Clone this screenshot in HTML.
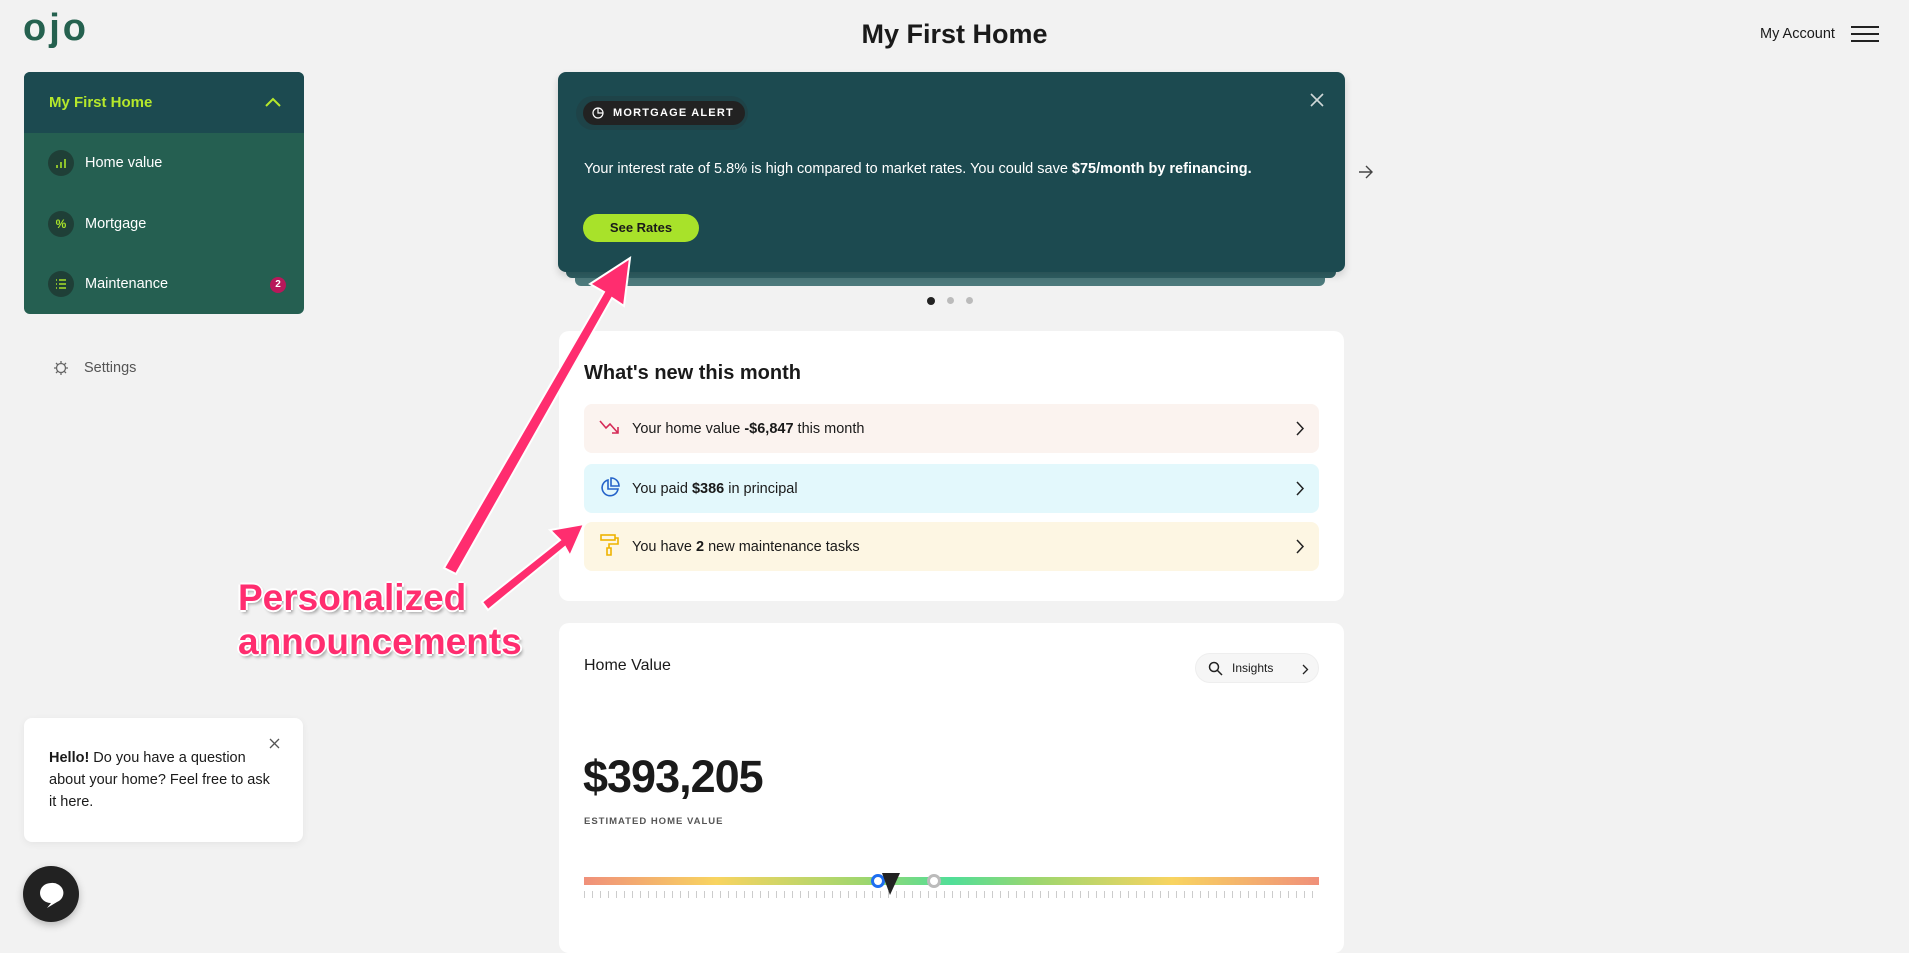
<!DOCTYPE html>
<html><head><meta charset="utf-8"><style>
*{box-sizing:border-box;margin:0;padding:0}
body{width:1909px;height:937px;overflow:hidden;background:#f2f2f2;font-family:"Liberation Sans",sans-serif;color:#1a1a1a;position:relative}
.abs{position:absolute}
.card{position:absolute;background:#fff;border-radius:10px}
.row{position:absolute;left:25px;width:735px;height:49px;border-radius:8px;font-size:14.5px;display:flex;align-items:center;padding-left:48px}
.row svg.ic{position:absolute;left:15px;top:14px}
.row .chev{position:absolute;right:14px;top:17px}
.nav{position:absolute;left:24px;width:280px;display:flex;align-items:center;color:#fff;font-size:14.5px}
.nav .c{width:26px;height:26px;border-radius:13px;background:#1f3f37;margin-left:24px;margin-right:11px;display:flex;align-items:center;justify-content:center}
</style></head><body>
<div class="abs" style="left:23px;top:8px;font-size:38px;font-weight:bold;color:#25614f;letter-spacing:3px;line-height:40px">ojo</div>
<div class="abs" style="left:0;width:1909px;top:19px;text-align:center;font-size:27px;font-weight:bold;color:#1a1a1a">My First Home</div>
<div class="abs" style="left:1760px;top:26px;font-size:14.5px">My Account</div>
<div class="abs" style="left:1851px;top:26px;width:28px;height:2px;background:#222;box-shadow:0 7px 0 #222,0 14px 0 #222"></div>

<div class="abs" style="left:24px;top:72px;width:280px;height:242px;border-radius:6px;overflow:hidden;background:#255f51">
 <div style="height:61px;background:#1c4a50;display:flex;align-items:center;padding-left:25px;color:#b6e82b;font-weight:bold;font-size:15px">My First Home
  <svg class="abs" style="left:240px;top:24px" width="18" height="12"><path d="M2 10 L9 3 L16 10" stroke="#b6e82b" stroke-width="2" fill="none"/></svg></div>
</div>
<div class="nav" style="top:150px"><span class="c"><svg width="12" height="12"><path d="M2 11V8M6 11V5M10 11V2" stroke="#a8e22a" stroke-width="1.6"/></svg></span>Home value</div>
<div class="nav" style="top:211px"><span class="c" style="color:#a8e22a;font-size:12px;font-weight:bold">%</span>Mortgage</div>
<div class="nav" style="top:271px"><span class="c"><svg width="12" height="12"><path d="M1 2h1M4 2h7M1 6h1M4 6h7M1 10h1M4 10h7" stroke="#a8e22a" stroke-width="1.4"/></svg></span>Maintenance</div>
<div class="abs" style="left:270px;top:277px;width:16px;height:16px;border-radius:8px;background:#b8185a;color:#fff;font-size:10px;font-weight:bold;text-align:center;line-height:16px">2</div>
<svg class="abs" style="left:53px;top:360px" width="16" height="16"><circle cx="8" cy="8" r="4.5" stroke="#666" stroke-width="1.3" fill="none"/><path d="M8 1v2.5M8 12.5V15M1 8h2.5M12.5 8H15M3 3l1.7 1.7M11.3 11.3L13 13M13 3l-1.7 1.7M4.7 11.3L3 13" stroke="#666" stroke-width="1.3"/></svg>
<div class="abs" style="left:84px;top:360px;font-size:14.5px;color:#555">Settings</div>

<div class="abs" style="left:575px;top:272px;width:750px;height:14px;background:#4d7a7c;border-radius:0 0 6px 6px"></div>
<div class="abs" style="left:566px;top:266px;width:770px;height:12px;background:#2f5f63;border-radius:0 0 6px 6px"></div>
<div class="abs" style="left:558px;top:72px;width:787px;height:200px;background:#1c4a50;border-radius:8px;box-shadow:0 4px 8px rgba(0,0,0,.15)">
 <div class="abs" style="left:18px;top:24px;width:172px;height:34px;border-radius:17px;background:#1e4348"></div>
 <div class="abs" style="left:25px;top:29px;width:162px;height:24px;border-radius:12px;background:#222;color:#fff;font-size:11px;font-weight:bold;letter-spacing:1.2px;line-height:24px;padding-left:30px">MORTGAGE ALERT</div>
 <svg class="abs" style="left:34px;top:35px" width="12" height="12"><circle cx="6" cy="6" r="5" stroke="#fff" stroke-width="1.2" fill="none"/><path d="M6 1v5h5" stroke="#fff" stroke-width="1.2" fill="none"/></svg>
 <div class="abs" style="left:26px;top:89px;color:#fff;font-size:14.5px;white-space:nowrap">Your interest rate of 5.8% is high compared to market rates. You could save <b>$75/month by refinancing.</b></div>
 <div class="abs" style="left:25px;top:142px;width:116px;height:28px;border-radius:14px;background:#a8e22a;color:#1a1a1a;font-size:13px;font-weight:bold;text-align:center;line-height:28px">See Rates</div>
 <svg class="abs" style="left:751px;top:20px" width="16" height="16"><path d="M2 2L14 14M14 2L2 14" stroke="#cfd8d8" stroke-width="1.6"/></svg>
</div>
<svg class="abs" style="left:1358px;top:165px" width="16" height="14"><path d="M1 7h13M8 1l6 6-6 6" stroke="#444" stroke-width="1.4" fill="none"/></svg>
<div class="abs" style="left:927px;top:297px;width:8px;height:8px;border-radius:4px;background:#222"></div>
<div class="abs" style="left:947px;top:297px;width:7px;height:7px;border-radius:4px;background:#bbb"></div>
<div class="abs" style="left:966px;top:297px;width:7px;height:7px;border-radius:4px;background:#bbb"></div>

<div class="card" style="left:559px;top:331px;width:785px;height:270px">
 <div class="abs" style="left:25px;top:31px;font-size:20px;font-weight:bold">What's new this month</div>
 <div class="row" style="top:73px;background:#fbf3ef">Your home value&nbsp;<b>-$6,847</b>&nbsp;this month
  <svg class="ic" width="22" height="18"><path d="M1 3l6 7 4-4 8 9M13 15h6v-6" stroke="#d52a57" stroke-width="1.6" fill="none"/></svg>
  <svg class="chev" width="9" height="15"><path d="M1 1l6 6.5L1 14" stroke="#222" stroke-width="1.5" fill="none"/></svg></div>
 <div class="row" style="top:133px;background:#e3f8fc">You paid&nbsp;<b>$386</b>&nbsp;in principal
  <svg class="ic" width="22" height="22" style="top:13px"><path d="M9 3a8 8 0 1 0 10 9H9z" stroke="#2463c9" stroke-width="1.6" fill="none"/><path d="M12 1a8 8 0 0 1 8 8h-8z" stroke="#2463c9" stroke-width="1.6" fill="none"/></svg>
  <svg class="chev" width="9" height="15"><path d="M1 1l6 6.5L1 14" stroke="#222" stroke-width="1.5" fill="none"/></svg></div>
 <div class="row" style="top:191px;background:#fdf6e3">You have&nbsp;<b>2</b>&nbsp;new maintenance tasks
  <svg class="ic" width="22" height="22" style="top:12px"><rect x="2" y="1" width="14" height="5" stroke="#eeb300" stroke-width="1.6" fill="none"/><path d="M16 4h3v6h-9v4M8 14h4v7H8z" stroke="#eeb300" stroke-width="1.6" fill="none"/></svg>
  <svg class="chev" width="9" height="15"><path d="M1 1l6 6.5L1 14" stroke="#222" stroke-width="1.5" fill="none"/></svg></div>
</div>

<div class="card" style="left:559px;top:623px;width:785px;height:330px">
 <div class="abs" style="left:25px;top:34px;font-size:16px">Home Value</div>
 <div class="abs" style="left:636px;top:30px;width:124px;height:30px;border-radius:15px;background:#f6f6f6;border:1px solid #eee;font-size:12px;line-height:28px;padding-left:36px">Insights
  <svg class="abs" style="left:12px;top:7px" width="15" height="15"><circle cx="6" cy="6" r="4.5" stroke="#222" stroke-width="1.5" fill="none"/><path d="M9.5 9.5L14 14" stroke="#222" stroke-width="1.5"/></svg>
  <svg class="abs" style="left:106px;top:10px" width="7" height="11"><path d="M1 1l4.5 4.5L1 10" stroke="#222" stroke-width="1.3" fill="none"/></svg></div>
 <div class="abs" style="left:24px;top:128px;font-size:45px;font-weight:bold;letter-spacing:-1px">$393,205</div>
 <div class="abs" style="left:25px;top:193px;font-size:9.5px;font-weight:bold;letter-spacing:1px;color:#555">ESTIMATED HOME VALUE</div>
 <div class="abs" style="left:25px;top:254px;width:735px;height:8px;background:linear-gradient(90deg,#f0907a,#f8d460 18%,#9fd66e 38%,#50de98 50%,#9fd66e 62%,#f8d460 80%,#f0907a)"></div>
 <div class="abs" style="left:25px;top:268px;width:735px;height:7px;background:repeating-linear-gradient(90deg,#ccc 0 1px,transparent 1px 8px)"></div>
 <div class="abs" style="left:312px;top:251px;width:14px;height:14px;border-radius:7px;border:3px solid #1e6ef0;background:#fff"></div>
 <svg class="abs" style="left:322px;top:249px" width="20" height="24"><path d="M1 1h18L9 23z" fill="#222"/></svg>
 <div class="abs" style="left:368px;top:251px;width:14px;height:14px;border-radius:7px;border:3px solid #bbb;background:#fff"></div>
</div>

<div class="abs" style="left:24px;top:718px;width:279px;height:124px;background:#fff;border-radius:8px;box-shadow:0 2px 8px rgba(0,0,0,.06)">
 <svg class="abs" style="left:245px;top:20px" width="11" height="11"><path d="M1 1l9 9M10 1L1 10" stroke="#555" stroke-width="1.3"/></svg>
 <div class="abs" style="left:25px;top:29px;width:222px;font-size:14.5px;line-height:22px"><b>Hello!</b> Do you have a question about your home? Feel free to ask it here.</div>
</div>
<div class="abs" style="left:23px;top:866px;width:56px;height:56px;border-radius:28px;background:#222;box-shadow:0 3px 8px rgba(0,0,0,.25)"></div>
<svg class="abs" style="left:36px;top:880px" width="30" height="30"><path d="M15 3a11 10 0 1 0 0 20l-4 5 10-6a11 10 0 0 0-6-19z" fill="#fff"/></svg>

<svg class="abs" style="left:0;top:0" width="1909" height="937">
 <g fill="#ff2d6f" stroke="#fff" stroke-width="2">
  <path d="M444 568 L604 292 L590 284 L630 258 L624 306 L612 298 L456 574 Z"/>
  <path d="M482 602 L560 540 L550 530 L584 524 L570 556 L565 547 L488 610 Z"/>
 </g>
</svg>
<div class="abs" style="left:238px;top:576px;font-size:37px;font-weight:bold;color:#ff2d6f;line-height:44px;text-shadow:2px 0 #fff,-2px 0 #fff,0 2px #fff,0 -2px #fff,2px 3px 3px rgba(0,0,0,.35)">Personalized<br>announcements</div>
</body></html>
